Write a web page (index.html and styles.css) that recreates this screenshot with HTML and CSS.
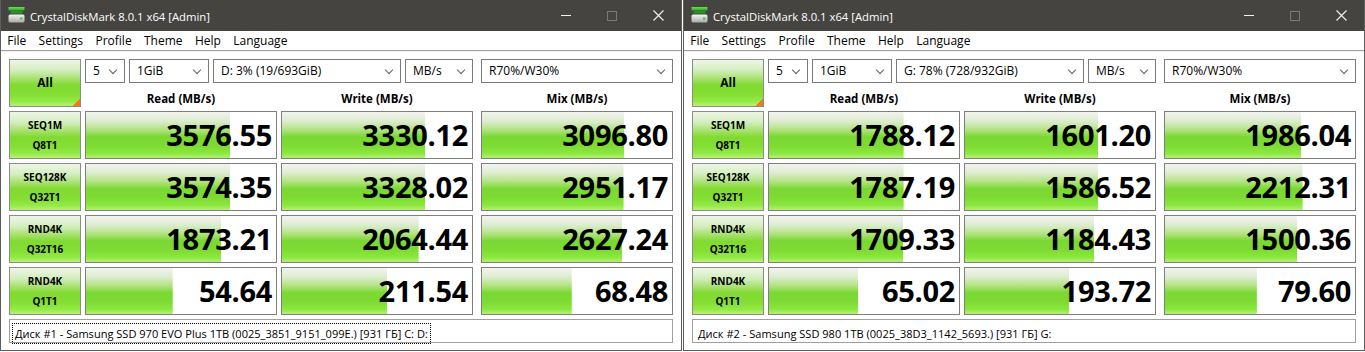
FILE: index.html
```html
<!DOCTYPE html>
<html lang="en">
<head>
  <meta charset="UTF-8">
  <title>CrystalDiskMark</title>
  <link rel="stylesheet" href="styles.css">
</head>
<body>

<div class="desktop">

  <div class="window">
    <div class="titlebar">
      <svg class="app-icon" width="17" height="17" viewBox="0 0 17 17">
        <defs>
          <linearGradient id="g1" x1="0" y1="0" x2="0" y2="1">
            <stop offset="0" stop-color="#6ae052"/>
            <stop offset="1" stop-color="#2aa82a"/>
          </linearGradient>
          <linearGradient id="d1" x1="0" y1="0" x2="0" y2="1">
            <stop offset="0" stop-color="#f4f4f4"/>
            <stop offset="1" stop-color="#a8a8a8"/>
          </linearGradient>
        </defs>
        <rect x="0.5" y="0" width="16" height="3.5" fill="url(#g1)"/>
        <rect x="2.5" y="3.5" width="12" height="3" fill="#2b8f2b"/>
        <rect x="0.5" y="7.5" width="16" height="8" rx="1.5" fill="url(#d1)"/>
        <rect x="12" y="10.5" width="2.5" height="2" fill="#3cc43c"/>
      </svg>
      <span class="title">CrystalDiskMark 8.0.1 x64 [Admin]</span>
      <div class="controls">
        <span class="ctl"><i class="min"></i></span>
        <span class="ctl"><i class="max"></i></span>
        <span class="ctl">
          <svg width="11" height="11" viewBox="0 0 11 11"><path d="M0.5 0.5 L10.5 10.5 M10.5 0.5 L0.5 10.5" stroke="#f2f2f2" stroke-width="1.1"/></svg>
        </span>
      </div>
    </div>

    <ul class="menu">
      <li>File</li>
      <li>Settings</li>
      <li>Profile</li>
      <li>Theme</li>
      <li>Help</li>
      <li>Language</li>
    </ul>

    <div class="panel">
      <div class="bench">
        <div class="row">
          <div class="all">All</div>
          <div class="top">
            <div class="selects">
              <div class="select w-count">5</div>
              <div class="select w-size">1GiB</div>
              <div class="select w-drive">D: 3% (19/693GiB)</div>
              <div class="select w-unit">MB/s</div>
              <div class="select w-mix mix">R70%/W30%</div>
            </div>
            <div class="heads">
              <div class="head">Read (MB/s)</div>
              <div class="head">Write (MB/s)</div>
              <div class="head mix">Mix (MB/s)</div>
            </div>
          </div>
        </div>

        <div class="row">
          <div class="label"><span>SEQ1M</span><span>Q8T1</span></div>
          <div class="value">3576.55</div>
          <div class="value">3330.12</div>
          <div class="value mix">3096.80</div>
        </div>
        <div class="row">
          <div class="label"><span>SEQ128K</span><span>Q32T1</span></div>
          <div class="value">3574.35</div>
          <div class="value">3328.02</div>
          <div class="value mix">2951.17</div>
        </div>
        <div class="row">
          <div class="label"><span>RND4K</span><span>Q32T16</span></div>
          <div class="value">1873.21</div>
          <div class="value">2064.44</div>
          <div class="value mix">2627.24</div>
        </div>
        <div class="row">
          <div class="label"><span>RND4K</span><span>Q1T1</span></div>
          <div class="value">54.64</div>
          <div class="value">211.54</div>
          <div class="value mix">68.48</div>
        </div>
      </div>

      <div class="status"><span class="comment focused">Диск #1 - Samsung SSD 970 EVO Plus 1TB (0025_3851_9151_099E.) [931 ГБ] C: D:</span></div>
    </div>
  </div>

  <div class="window">
    <div class="titlebar">
      <svg class="app-icon" width="17" height="17" viewBox="0 0 17 17">
        <rect x="0.5" y="0" width="16" height="3.5" fill="url(#g1)"/>
        <rect x="2.5" y="3.5" width="12" height="3" fill="#2b8f2b"/>
        <rect x="0.5" y="7.5" width="16" height="8" rx="1.5" fill="url(#d1)"/>
        <rect x="12" y="10.5" width="2.5" height="2" fill="#3cc43c"/>
      </svg>
      <span class="title">CrystalDiskMark 8.0.1 x64 [Admin]</span>
      <div class="controls">
        <span class="ctl"><i class="min"></i></span>
        <span class="ctl"><i class="max"></i></span>
        <span class="ctl">
          <svg width="11" height="11" viewBox="0 0 11 11"><path d="M0.5 0.5 L10.5 10.5 M10.5 0.5 L0.5 10.5" stroke="#f2f2f2" stroke-width="1.1"/></svg>
        </span>
      </div>
    </div>

    <ul class="menu">
      <li>File</li>
      <li>Settings</li>
      <li>Profile</li>
      <li>Theme</li>
      <li>Help</li>
      <li>Language</li>
    </ul>

    <div class="panel">
      <div class="bench">
        <div class="row">
          <div class="all">All</div>
          <div class="top">
            <div class="selects">
              <div class="select w-count">5</div>
              <div class="select w-size">1GiB</div>
              <div class="select w-drive">G: 78% (728/932GiB)</div>
              <div class="select w-unit">MB/s</div>
              <div class="select w-mix mix">R70%/W30%</div>
            </div>
            <div class="heads">
              <div class="head">Read (MB/s)</div>
              <div class="head">Write (MB/s)</div>
              <div class="head mix">Mix (MB/s)</div>
            </div>
          </div>
        </div>

        <div class="row">
          <div class="label"><span>SEQ1M</span><span>Q8T1</span></div>
          <div class="value">1788.12</div>
          <div class="value">1601.20</div>
          <div class="value mix">1986.04</div>
        </div>
        <div class="row">
          <div class="label"><span>SEQ128K</span><span>Q32T1</span></div>
          <div class="value">1787.19</div>
          <div class="value">1586.52</div>
          <div class="value mix">2212.31</div>
        </div>
        <div class="row">
          <div class="label"><span>RND4K</span><span>Q32T16</span></div>
          <div class="value">1709.33</div>
          <div class="value">1184.43</div>
          <div class="value mix">1500.36</div>
        </div>
        <div class="row">
          <div class="label"><span>RND4K</span><span>Q1T1</span></div>
          <div class="value">65.02</div>
          <div class="value">193.72</div>
          <div class="value mix">79.60</div>
        </div>
      </div>

      <div class="status"><span class="comment">Диск #2 - Samsung SSD 980 1TB (0025_38D3_1142_5693.) [931 ГБ] G:</span></div>
    </div>
  </div>

</div>

<script>
  // meter length is logarithmic: 0.1 MB/s .. 100000 MB/s over the full cell
  document.querySelectorAll(".value").forEach(function (cell) {
    let score = parseFloat(cell.textContent);
    let fill = Math.log10(score * 10) / 6 * 100;
    cell.style.setProperty("--fill", fill.toFixed(2) + "%");
  });
</script>

</body>
</html>
```

FILE: styles.css
```css
body {
  margin: 0;
  background: #fff;
  font-family: "Open Sans", "Noto Sans", sans-serif;
  color: #000;
}

.desktop {
  display: flex;
  gap: 1px;
}

.window {
  width: 682px;
  height: 351px;
  box-sizing: border-box;
  border: 1px solid #5e5e5e;
  border-top: 0;
  display: flex;
  flex-direction: column;
  background: #fff;
}

/* title bar */
.titlebar {
  height: 31px;
  background: #464441;
  color: #fff;
  display: flex;
  align-items: center;
  font-size: 11.3px;
}

.app-icon {
  margin: 0 5px 0 7px;
}

.title {
  flex: 1;
  padding-top: 1px;
}

.controls {
  display: flex;
  align-self: stretch;
}

.ctl {
  width: 46px;
  display: flex;
  align-items: center;
  justify-content: center;
}

.ctl .min {
  width: 10px;
  height: 1px;
  background: #f2f2f2;
}

.ctl .max {
  width: 10px;
  height: 10px;
  box-sizing: border-box;
  border: 1px solid #7a7a78;
}

/* menu */
.menu {
  list-style: none;
  margin: 0;
  padding: 0;
  height: 19px;
  display: flex;
  font-size: 12px;
  line-height: 19px;
  border-bottom: 1px solid #a0a0a0;
}

.menu li {
  padding: 0 6.2px;
}

/* benchmark panel */
.panel {
  flex: 1;
  padding: 7px 8px 0 8px;
  border-top: 1px solid #f0f0f0;
}

.bench {
  display: flex;
  flex-direction: column;
  gap: 4px;
}

.row {
  display: flex;
  gap: 4px;
}

.mix {
  margin-left: 4px;
}

.all,
.label {
  width: 72px;
  height: 48px;
  box-sizing: border-box;
  border: 1px solid #8c8c8c;
  background: linear-gradient(to bottom, #eef6e6 0%, #d4eec0 22%, #a4e068 42%, #80da30 55%, #84de34 75%, #94ea44 90%, #b8f27c 100%);
  font-weight: bold;
}

.all {
  position: relative;
  font-size: 12px;
  line-height: 46px;
  text-align: center;
}

.all::after {
  content: "";
  position: absolute;
  right: 0;
  bottom: 0;
  width: 8px;
  height: 8px;
  background: linear-gradient(to top left, #f27a1e 50%, transparent 50%);
}

.top {
  display: flex;
  flex-direction: column;
}

.selects {
  display: flex;
  gap: 4px;
  height: 24px;
}

.select {
  position: relative;
  box-sizing: border-box;
  height: 24px;
  border: 1px solid #7a7a7a;
  padding-left: 7px;
  font-size: 12px;
  line-height: 22px;
  white-space: nowrap;
}

.select::after {
  content: "";
  position: absolute;
  right: 8px;
  top: 7px;
  width: 5px;
  height: 5px;
  border-right: 1px solid #606060;
  border-bottom: 1px solid #606060;
  transform: rotate(45deg);
}

.w-count { width: 40px; }
.w-size { width: 80px; }
.w-drive { width: 188px; }
.w-unit { width: 68px; }
.w-mix { width: 192px; }

.heads {
  display: flex;
  gap: 4px;
}

.head {
  width: 192px;
  height: 24px;
  box-sizing: border-box;
  padding-top: 8px;
  line-height: 16px;
  text-align: center;
  font-size: 11.5px;
  font-weight: bold;
}

.label {
  display: flex;
  flex-direction: column;
  justify-content: center;
  align-items: center;
  font-size: 10px;
  line-height: 20px;
}

.value {
  width: 192px;
  height: 48px;
  box-sizing: border-box;
  border: 1px solid #7f7f7f;
  padding-right: 4px;
  background: linear-gradient(to bottom, #f2f4f0 0%, #dcecce 20%, #aee27a 40%, #7ad832 54%, #7edb34 74%, #8ce83e 90%, #b4f07a 100%) no-repeat 0 0 / var(--fill) 100%, #fff;
  text-align: right;
  font-size: 29px;
  font-weight: bold;
  line-height: 46px;
  letter-spacing: -0.3px;
}

/* comment / drive info */
.status {
  margin-top: 4px;
  height: 24px;
  box-sizing: border-box;
  border: 1px solid #a0a0a0;
  padding: 1px 2px;
}

.comment {
  display: inline-block;
  height: 21px;
  box-sizing: border-box;
  border: 1px dotted transparent;
  padding: 0 2px;
  font-size: 11.05px;
  line-height: 19px;
  white-space: nowrap;
}

.comment.focused {
  border-color: #000;
}
```
